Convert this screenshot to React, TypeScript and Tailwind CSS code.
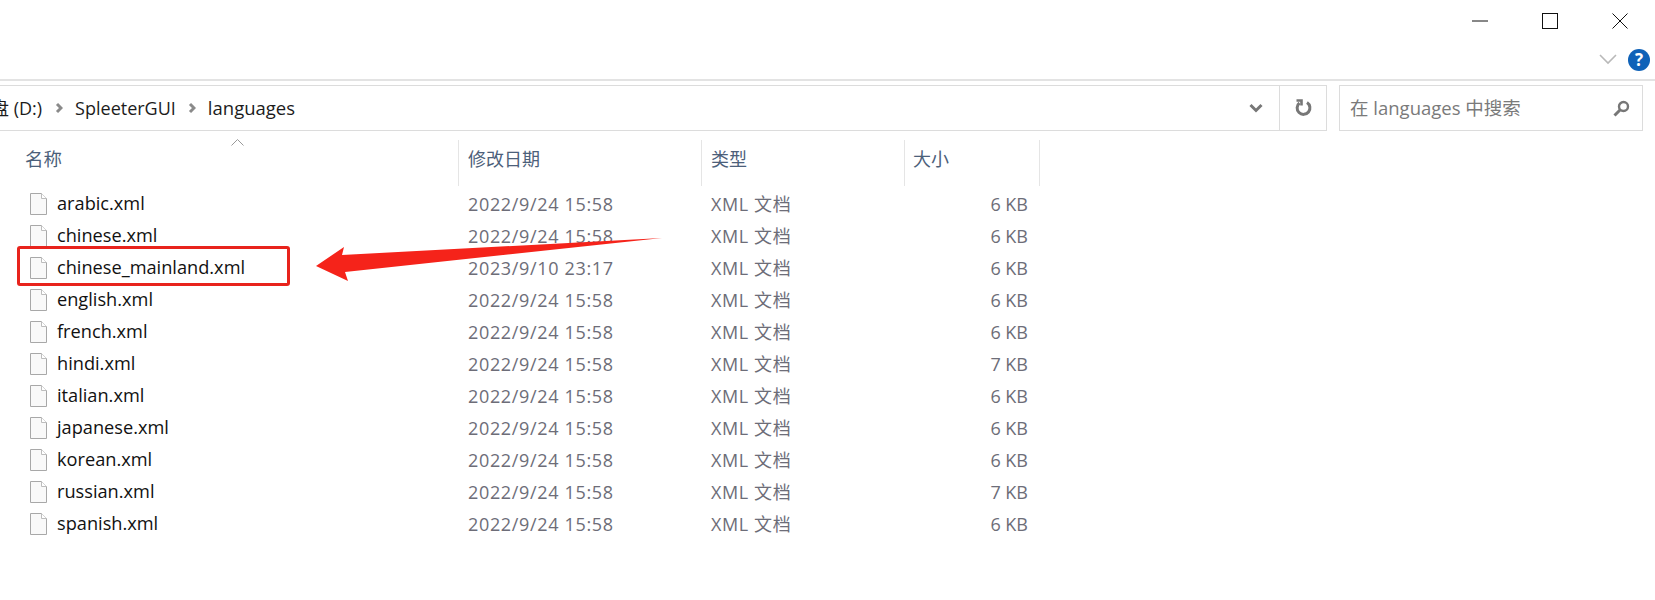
import React from 'react';

const font = { fontFamily: '"Open Sans", "Noto Sans CJK SC", sans-serif' };

const files = [
  { name: 'arabic.xml', date: '2022/9/24 15:58', size: '6 KB' },
  { name: 'chinese.xml', date: '2022/9/24 15:58', size: '6 KB' },
  { name: 'chinese_mainland.xml', date: '2023/9/10 23:17', size: '6 KB' },
  { name: 'english.xml', date: '2022/9/24 15:58', size: '6 KB' },
  { name: 'french.xml', date: '2022/9/24 15:58', size: '6 KB' },
  { name: 'hindi.xml', date: '2022/9/24 15:58', size: '7 KB' },
  { name: 'italian.xml', date: '2022/9/24 15:58', size: '6 KB' },
  { name: 'japanese.xml', date: '2022/9/24 15:58', size: '6 KB' },
  { name: 'korean.xml', date: '2022/9/24 15:58', size: '6 KB' },
  { name: 'russian.xml', date: '2022/9/24 15:58', size: '7 KB' },
  { name: 'spanish.xml', date: '2022/9/24 15:58', size: '6 KB' },
];

function FileIcon() {
  return (
    <svg width="17" height="22" viewBox="0 0 17 22" className="shrink-0">
      <path d="M0.5 0.5H11.5L16.5 5.5V21.5H0.5Z" fill="#f9f9f9" stroke="#a8a8a8" />
      <path d="M11.5 0.5V5.5H16.5" fill="#fff" stroke="#bdbdbd" />
    </svg>
  );
}

function Crumb() {
  return (
    <svg width="8" height="12" viewBox="0 0 8 12" className="shrink-0">
      <path d="M2 2L6 6L2 10" fill="none" stroke="#8a8a8a" strokeWidth="3" />
    </svg>
  );
}

function HeaderCell({ label, className }: { label: string; className: string }) {
  return (
    <div className={`${className} flex h-[46px] items-center border-r border-[#e5e5e5] pb-[8px] text-[18px] text-[#4c607a]`}>
      {label}
    </div>
  );
}

export default function App() {
  return (
    <div className="relative h-[600px] w-[1655px] overflow-hidden bg-white" style={font}>
      {/* window buttons */}
      <div className="flex h-[41px] justify-end">
        <div className="flex w-[70px] items-center justify-center">
          <svg width="16" height="2" viewBox="0 0 16 2"><path d="M0 1H16" stroke="#111" strokeWidth="1" /></svg>
        </div>
        <div className="flex w-[70px] items-center justify-center">
          <svg width="16" height="16" viewBox="0 0 16 16"><rect x="0.5" y="0.5" width="15" height="15" fill="none" stroke="#111" /></svg>
        </div>
        <div className="flex w-[70px] items-center justify-center">
          <svg width="16" height="16" viewBox="0 0 16 16"><path d="M0.5 0.5L15.5 15.5M15.5 0.5L0.5 15.5" stroke="#111" /></svg>
        </div>
      </div>

      {/* ribbon row */}
      <div className="flex h-[40px] items-center justify-end gap-[11px] border-b-2 border-[#e3e3e3] pr-[5px] pb-[1px]">
        <svg width="18" height="11" viewBox="0 0 18 11"><path d="M1 1L9 9L17 1" fill="none" stroke="#b9b9b9" strokeWidth="1.6" /></svg>
        <div className="flex h-[22px] w-[22px] items-center justify-center rounded-full bg-[#0f62b8] text-[17px] font-bold text-white">?</div>
      </div>

      {/* address + search */}
      <div className="mt-[4px] flex h-[46px] gap-[12px] pr-[12px]">
        <div className="-ml-[2px] flex flex-1 items-center border border-[#dcdcdc]">
          <div className="flex flex-1 items-center overflow-hidden text-[18px] text-[#1c1c1c]">
            <span className="-ml-[8px] mr-[13px]">盘 (D:)</span>
            <Crumb />
            <span className="ml-[12px] mr-[12px]">SpleeterGUI</span>
            <Crumb />
            <span className="ml-[12px] text-[18.5px]">languages</span>
          </div>
          <div className="flex w-[46px] items-center justify-center">
            <svg width="14" height="10" viewBox="0 0 14 10"><path d="M1.5 2L7 7.5L12.5 2" fill="none" stroke="#777" strokeWidth="3" /></svg>
          </div>
          <div className="flex h-full w-[47px] items-center justify-center border-l border-[#dcdcdc]">
            <svg width="18" height="18" viewBox="0 0 18 18">
              <path d="M5.5 4A6.4 6.4 0 1 0 13 3.6" fill="none" stroke="#777" strokeWidth="3" />
              <path d="M2.5 1.5H7.5V6.5" fill="none" stroke="#777" strokeWidth="2.6" />
            </svg>
          </div>
        </div>
        <div className="flex w-[304px] items-center justify-between border border-[#dcdcdc] pl-[10px] pr-[12px] text-[18.5px] text-[#7a7a7a]">
          <span>在 languages 中搜索</span>
          <svg width="17" height="17" viewBox="0 0 17 17">
            <circle cx="10.5" cy="6.5" r="4.5" fill="none" stroke="#777" strokeWidth="2.4" />
            <path d="M7 10L1.5 15.5" stroke="#777" strokeWidth="3" />
          </svg>
        </div>
      </div>

      {/* column headers */}
      <div className="relative mt-[9px] flex">
        <HeaderCell label="" className="w-[459px]" />
        <HeaderCell label="修改日期" className="w-[243px] pl-[9px]" />
        <HeaderCell label="类型" className="w-[203px] pl-[9px]" />
        <HeaderCell label="大小" className="w-[135px] pl-[8px]" />
        <div className="absolute left-[25px] top-0 flex h-[46px] items-center pb-[8px] text-[18.5px] text-[#4c607a]">名称</div>
        <svg className="absolute left-[231px] -top-[1px]" width="13" height="7" viewBox="0 0 13 7">
          <path d="M0.5 6.5L6.5 0.5L12.5 6.5" fill="none" stroke="#999" />
        </svg>
      </div>

      {/* file list */}
      <div className="mt-[2px] flex flex-col">
        {files.map((f) => (
          <div key={f.name} className="flex h-[32px] items-center text-[18px]">
            <div className="flex w-[458px] items-center gap-[10px] pl-[30px] text-[18.2px] text-[#111]">
              <FileIcon />
              <span>{f.name}</span>
            </div>
            <div className="w-[244px] pl-[10px] tracking-[0.66px] text-[#6d6d78]">{f.date}</div>
            <div className="w-[204px] pl-[9px] tracking-[0.6px] text-[#6d6d78]">XML 文档</div>
            <div className="w-[122px] text-right text-[#6d6d78]">{f.size}</div>
          </div>
        ))}
      </div>

      {/* annotation */}
      <div className="absolute left-[17px] top-[246px] h-[40px] w-[273px] rounded-[3px] border-[3px] border-[#e8231c]" />
      <svg className="absolute left-[310px] top-[230px]" width="355" height="60" viewBox="0 0 355 60">
        <path d="M6 36L34 17L32 25L352 8L35 42L38 51Z" fill="#f5231a" />
      </svg>
    </div>
  );
}
